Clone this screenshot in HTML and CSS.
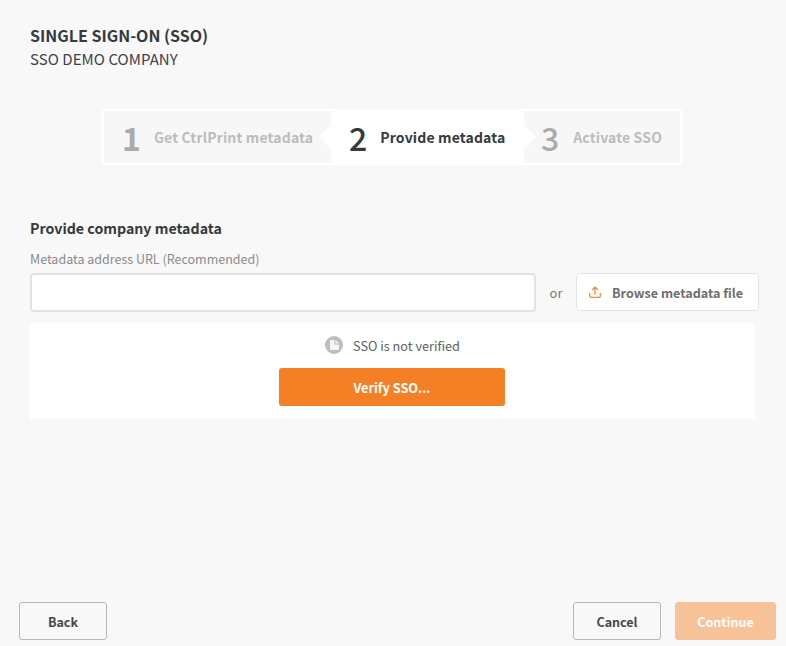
FILE: index.html
```html
<!DOCTYPE html>
<html lang="en">
<head>
<meta charset="utf-8">
<title>Single Sign-On (SSO)</title>
<link rel="stylesheet" href="styles.css">
</head>
<body>
<div class="page">
  <main class="content">
    <header class="head">
      <h1 class="title">SINGLE SIGN-ON (SSO)</h1>
      <p class="company">SSO DEMO COMPANY</p>
    </header>
    <ol class="steps">
      <li class="step step-one"><span class="num">1</span><span class="label">Get CtrlPrint metadata</span></li>
      <li class="step step-two"><span class="num">2</span><span class="label">Provide metadata</span></li>
      <li class="step step-three"><span class="num">3</span><span class="label">Activate SSO</span></li>
    </ol>
    <section class="meta">
      <h2 class="meta-title">Provide company metadata</h2>
      <label class="field-label" for="url">Metadata address URL (Recommended)</label>
      <div class="field-row">
        <input class="url-input" id="url" type="text">
        <span class="or">or</span>
        <button class="browse" type="button">
          <svg class="upload" width="12" height="12" viewBox="0 0 12 12" fill="none" stroke="#f58a3c" stroke-width="1.3" stroke-linecap="round" stroke-linejoin="round"><path d="M6 8V1.2M3.4 3.6 6 1l2.6 2.6M.7 7.4v2.6c0 .8.5 1.3 1.3 1.3h8c.8 0 1.3-.5 1.3-1.3V7.4"/></svg>
          <span>Browse metadata file</span>
        </button>
      </div>
      <div class="verify">
        <div class="status">
          <svg class="status-icon" width="18" height="18" viewBox="0 0 18 18"><circle cx="9" cy="9" r="9" fill="#bdbdbd"/><path d="M5 4h4.5v4.5H14V14H5z" fill="#f4f4f4"/><path d="M10.5 4 14 7.5h-3.5z" fill="#f4f4f4"/></svg>
          <span>SSO is not verified</span>
        </div>
        <button class="verify-btn" type="button">Verify SSO...</button>
      </div>
    </section>
  </main>
  <footer class="foot">
    <button class="btn back" type="button">Back</button>
    <div class="foot-right">
      <button class="btn cancel" type="button">Cancel</button>
      <button class="btn continue" type="button">Continue</button>
    </div>
  </footer>
</div>
</body>
</html>
```
FILE: styles.css
```css
* { box-sizing: border-box; }
html, body { margin: 0; padding: 0; }
body {
  background: #f8f8f8;
  color: #343a40;
  font-family: "Noto Sans CJK SC", "Noto Sans", sans-serif;
}
button, input { font-family: inherit; }
.page {
  height: 646px;
  display: flex;
  flex-direction: column;
  overflow: hidden;
}
.content { flex: 1; padding: 25px 30px 0; }
.title { margin: 0; font-size: 16px; line-height: 20px; font-weight: 700; color: #343a40; }
.company { margin: 4px 0 0; font-size: 15px; line-height: 20px; font-weight: 400; color: #3d4248; letter-spacing: 0.05px; }
.steps {
  list-style: none;
  margin: 40px 0 0 72px;
  padding: 0;
  width: 580px;
  height: 56px;
  display: flex;
  border: 2px solid #fff;
  border-radius: 3px;
  background: #f7f7f7;
}
.step { display: flex; align-items: center; position: relative; color: #bcbcbc; }
.num { font-size: 32px; line-height: 52px; color: #ababab; font-weight: 500; }
.label { font-size: 14px; line-height: 20px; font-weight: 700; letter-spacing: 0.15px; }
.step-one { width: 227px; padding-left: 18px; }
.step-one .num { font-weight: 700; }
.step-one .label { margin-left: 13px; }
.step-two { width: 193px; padding-left: 18px; background: #fff; color: #343a40; }
.step-two .num { color: #343a40; }
.step-two .label { margin-left: 13px; }
.step-two::before, .step-two::after {
  content: "";
  position: absolute;
  top: 50%;
  margin-top: -12px;
  border-top: 12px solid transparent;
  border-bottom: 12px solid transparent;
}
.step-two::before { left: -12px; border-right: 12px solid #fff; }
.step-two::after { right: -12px; border-left: 12px solid #fff; }
.step-three { flex: 1; padding-left: 17px; }
.step-three .label { margin-left: 14px; }
.meta { margin-top: 53px; }
.meta-title { margin: 0; font-size: 14.2px; line-height: 20px; font-weight: 700; color: #343a40; }
.field-label { display: block; margin-top: 11px; font-size: 12.5px; line-height: 20px; color: #8b8b8b; }
.field-row { display: flex; align-items: center; margin-top: 4px; width: 729px; }
.url-input {
  width: 506px;
  height: 39px;
  background: #fff;
  border: 2px solid #e2e2e2;
  border-radius: 4px;
  outline: none;
}
.or { width: 40px; text-align: center; font-size: 13px; line-height: 20px; color: #77797c; }
.browse {
  display: flex;
  align-items: center;
  width: 183px;
  height: 38px;
  margin-top: -1px;
  padding: 0 0 0 12px;
  background: #fff;
  border: 1px solid #e3e3e3;
  border-radius: 5px;
  font-size: 12.6px;
  font-weight: 700;
  color: #6e6e6e;
  white-space: nowrap;
}
.upload { margin-right: 11px; }
.verify {
  margin-top: 11px;
  width: 725px;
  height: 96px;
  background: #fff;
  display: flex;
  flex-direction: column;
  align-items: center;
  padding-top: 12px;
}
.status { display: flex; align-items: center; height: 20px; font-size: 12.7px; color: #5c6066; }
.status-icon { margin-right: 10px; }
.verify-btn {
  margin-top: 13px;
  margin-right: 1px;
  width: 226px;
  height: 38px;
  background: #f57f25;
  color: #fff;
  border: 0;
  border-radius: 3px;
  font-size: 12.7px;
  font-weight: 700;
}
.foot {
  display: flex;
  justify-content: space-between;
  padding: 0 10px 6px 19px;
}
.foot-right { display: flex; gap: 14px; }
.btn {
  height: 38px;
  border-radius: 3px;
  font-size: 12.5px;
  font-weight: 700;
  background: transparent;
  border: 1px solid #b9b9b9;
  color: #43474c;
}
.back { width: 88px; }
.cancel { width: 88px; }
.continue { width: 101px; background: #f8c299; border-color: #f8c299; color: #fff; }
```
